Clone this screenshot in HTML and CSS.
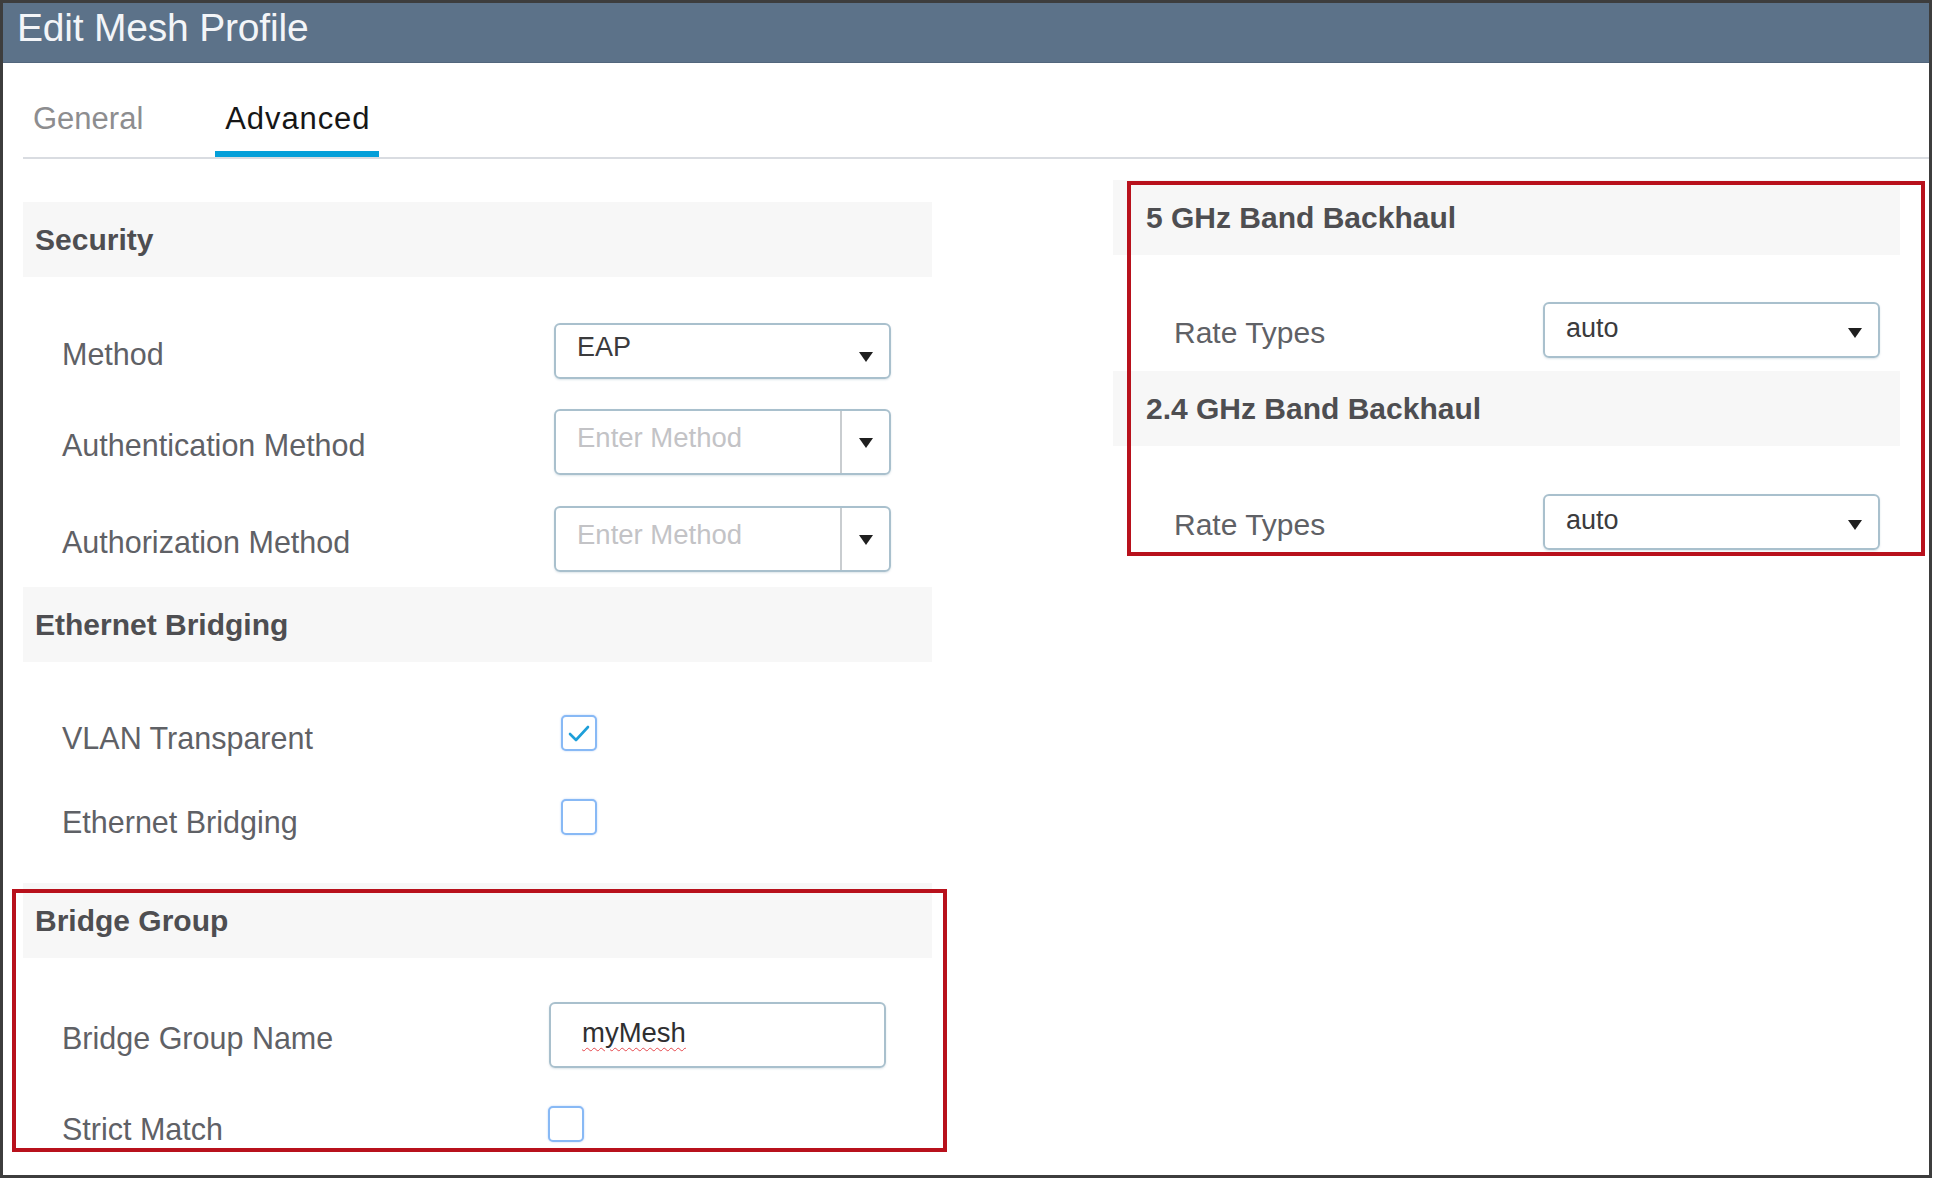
FILE: index.html
```html
<!DOCTYPE html>
<html lang="en">
<head>
<meta charset="utf-8">
<title>Edit Mesh Profile</title>
<link rel="stylesheet" href="styles.css">
</head>
<body>
<div class="frame">
  <div class="header"><span class="title">Edit Mesh Profile</span></div>
  <div class="tabs">
    <div class="tab">General</div>
    <div class="tab active">Advanced</div>
  </div>
  <div class="content">
    <div class="col col-left">
      <div class="band band-security">Security</div>
      <div class="row row-method">
        <div class="label">Method</div>
        <div class="ctrl">
          <div class="select">
            <span class="val">EAP</span>
            <svg class="arrow" width="14" height="10" viewBox="0 0 14 10"><polygon points="0,0 14,0 7,10"/></svg>
          </div>
        </div>
      </div>
      <div class="row row-combo row-auth">
        <div class="label">Authentication Method</div>
        <div class="ctrl">
          <div class="combo">
            <span class="ph">Enter Method</span>
            <span class="combo-btn"><svg class="arrow" width="14" height="10" viewBox="0 0 14 10"><polygon points="0,0 14,0 7,10"/></svg></span>
          </div>
        </div>
      </div>
      <div class="row row-combo row-authz">
        <div class="label">Authorization Method</div>
        <div class="ctrl">
          <div class="combo">
            <span class="ph">Enter Method</span>
            <span class="combo-btn"><svg class="arrow" width="14" height="10" viewBox="0 0 14 10"><polygon points="0,0 14,0 7,10"/></svg></span>
          </div>
        </div>
      </div>
      <div class="band band-eth">Ethernet Bridging</div>
      <div class="row row-check row-vlan">
        <div class="label">VLAN Transparent</div>
        <div class="ctrl">
          <span class="checkbox"><svg width="31" height="31" viewBox="0 0 31 31"><polyline points="6,16 12,22 24,9" fill="none" stroke="#1e9fd9" stroke-width="2.6" stroke-linecap="round" stroke-linejoin="round"/></svg></span>
        </div>
      </div>
      <div class="row row-check row-ethb">
        <div class="label">Ethernet Bridging</div>
        <div class="ctrl"><span class="checkbox"></span></div>
      </div>
      <div class="annotated annotated-left">
        <div class="band band-bridge">Bridge Group</div>
        <div class="row row-name">
          <div class="label">Bridge Group Name</div>
          <div class="ctrl">
            <div class="textbox"><span class="typed">myMesh</span></div>
          </div>
        </div>
        <div class="row row-check row-strict">
          <div class="label">Strict Match</div>
          <div class="ctrl"><span class="checkbox checkbox-strict"></span></div>
        </div>
      </div>
    </div>
    <div class="col col-right">
      <div class="annotated annotated-right">
        <div class="band band-5g">5 GHz Band Backhaul</div>
        <div class="row row-rate row-rate1">
          <div class="label">Rate Types</div>
          <div class="ctrl">
            <div class="select select-rate">
              <span class="val">auto</span>
              <svg class="arrow" width="14" height="10" viewBox="0 0 14 10"><polygon points="0,0 14,0 7,10"/></svg>
            </div>
          </div>
        </div>
        <div class="band band-24g">2.4 GHz Band Backhaul</div>
        <div class="row row-rate row-rate2">
          <div class="label">Rate Types</div>
          <div class="ctrl">
            <div class="select select-rate">
              <span class="val">auto</span>
              <svg class="arrow" width="14" height="10" viewBox="0 0 14 10"><polygon points="0,0 14,0 7,10"/></svg>
            </div>
          </div>
        </div>
      </div>
    </div>
  </div>
</div>
</body>
</html>
```
FILE: styles.css
```css
html, body {
  margin: 0;
  padding: 0;
  background: #ffffff;
}

body {
  font-family: "Liberation Sans", Arial, sans-serif;
  color: #5f6166;
}

.frame {
  width: 1932px;
  height: 1178px;
  box-sizing: border-box;
  border: 3px solid #3d3d3d;
  background: #ffffff;
  overflow: hidden;
}

/* Header */
.header {
  height: 60px;
  box-sizing: border-box;
  background: #5c7289;
  border-bottom: 1px solid #52667c;
  padding-left: 14px;
  display: flex;
  align-items: flex-start;
}

.title {
  font-size: 39px;
  line-height: 50px;
  color: #f3f5f8;
  letter-spacing: -0.2px;
}

/* Tabs */
.tabs {
  margin-left: 20px;
  padding-top: 36px;
  display: flex;
  border-bottom: 2px solid #d9dce1;
}

.tab {
  font-size: 31px;
  line-height: 40px;
  padding: 0 9px 12px 10px;
  margin-right: 63px;
  color: #8d8d8f;
  border-bottom: 6px solid transparent;
}

.tab.active {
  color: #161616;
  letter-spacing: 0.9px;
  border-bottom-color: #049fd9;
  border-radius: 3px 3px 0 0;
}

/* Content */
.content {
  padding-left: 20px;
  display: grid;
  grid-template-columns: 909px 787px;
  column-gap: 181px;
  align-items: start;
}

.col {
  display: flex;
  flex-direction: column;
}

.band {
  height: 75px;
  box-sizing: border-box;
  background: #f7f7f7;
  display: flex;
  align-items: center;
  padding-left: 12px;
  font-size: 30px;
  font-weight: 700;
  color: #4e4e51;
}

.band-security { margin-top: 43px; }
.band-eth { margin-top: 15px; }
.band-bridge { margin-top: 0; }
.band-5g { margin-top: 0; padding-left: 33px; }
.band-24g { margin-top: 13px; padding-left: 33px; }

.row {
  display: grid;
  grid-template-columns: 531px 1fr;
  grid-template-rows: 100%;
  align-items: center;
}

.label {
  padding-left: 39px;
  font-size: 30.5px;
  line-height: 36px;
  color: #5f6166;
  padding-top: 3px;
  margin-bottom: -3px;
}

.ctrl {
  display: flex;
  align-items: center;
}

/* Row heights and vertical rhythm */
.row-method { height: 56px; margin-top: 46px; }
.row-combo { height: 66px; }
.row-auth { margin-top: 30px; }
.row-authz { margin-top: 31px; }
.row-check { height: 36px; }
.row-vlan { margin-top: 53px; }
.row-ethb { margin-top: 48px; }
.row-name { height: 66px; margin-top: 44px; }
.row-strict { margin-top: 38px; }
.row-rate { height: 56px; }

.row-check .label { padding-top: 5px; margin-bottom: -5px; }

/* Select */
.select {
  width: 337px;
  height: 56px;
  box-sizing: border-box;
  border: 2px solid #a9c0cd;
  border-radius: 6px;
  box-shadow: 0 1px 2px rgba(120, 150, 170, 0.25);
  display: flex;
  align-items: center;
  padding: 0 16px 0 21px;
}

.select .val {
  flex: 1;
  font-size: 27px;
  color: #3b3b3d;
  margin-bottom: 8px;
}

.arrow {
  display: block;
  fill: #1f1f1f;
}

.select .arrow { margin-top: 12px; }

/* Combo (placeholder + separate button) */
.combo {
  width: 337px;
  height: 66px;
  box-sizing: border-box;
  border: 2px solid #a9c0cd;
  border-radius: 6px;
  box-shadow: 0 1px 2px rgba(120, 150, 170, 0.25);
  display: flex;
  align-items: stretch;
}

.ph {
  flex: 1;
  font-size: 27.5px;
  color: #c3c3c6;
  padding-left: 21px;
  padding-top: 9px;
  line-height: 36px;
}

.combo-btn {
  width: 47px;
  border-left: 2px solid #c9cdd0;
  display: flex;
  align-items: center;
  justify-content: center;
}

.combo-btn .arrow { margin-top: 2px; }

/* Checkbox */
.checkbox {
  width: 36px;
  height: 36px;
  box-sizing: border-box;
  border: 2.5px solid #88b9f5;
  border-radius: 5px;
  box-shadow: 0 0 2px rgba(90, 150, 240, 0.45);
  margin-left: 7px;
  display: flex;
  align-items: center;
  justify-content: center;
  background: #ffffff;
}

.checkbox-strict { margin-left: -6px; }

/* Text box */
.textbox {
  width: 337px;
  height: 66px;
  margin-left: -5px;
  box-sizing: border-box;
  border: 2px solid #a9c0cd;
  border-radius: 6px;
  box-shadow: 0 1px 2px rgba(120, 150, 170, 0.25);
  display: flex;
  align-items: center;
  padding-left: 31px;
}

.typed {
  font-size: 27.5px;
  color: #2f2f31;
  margin-bottom: 4px;
  text-decoration: underline wavy #e5484d;
  text-decoration-thickness: 1px;
  text-underline-offset: 5px;
}

/* Right column */
.col-right .row { grid-template-columns: 430px 1fr; }
.col-right .label { padding-left: 61px; font-size: 30px; }
.row-rate1 { margin-top: 47px; }
.row-rate2 { margin-top: 48px; }
.select-rate .val { margin-bottom: 4px; }
.select-rate .arrow { margin-top: 6px; }

/* Red annotation boxes drawn over content */
.annotated {
  position: relative;
}

.annotated-left { margin-top: 48px; }
.annotated-right { margin-top: 21px; }

.annotated::after {
  content: "";
  position: absolute;
  border: 4px solid #b8111c;
  pointer-events: none;
}

.annotated-left::after {
  top: 6px;
  bottom: -10px;
  left: -11px;
  right: -15px;
}

.annotated-right::after {
  top: 1px;
  bottom: -6px;
  left: 14px;
  right: -25px;
}
```
